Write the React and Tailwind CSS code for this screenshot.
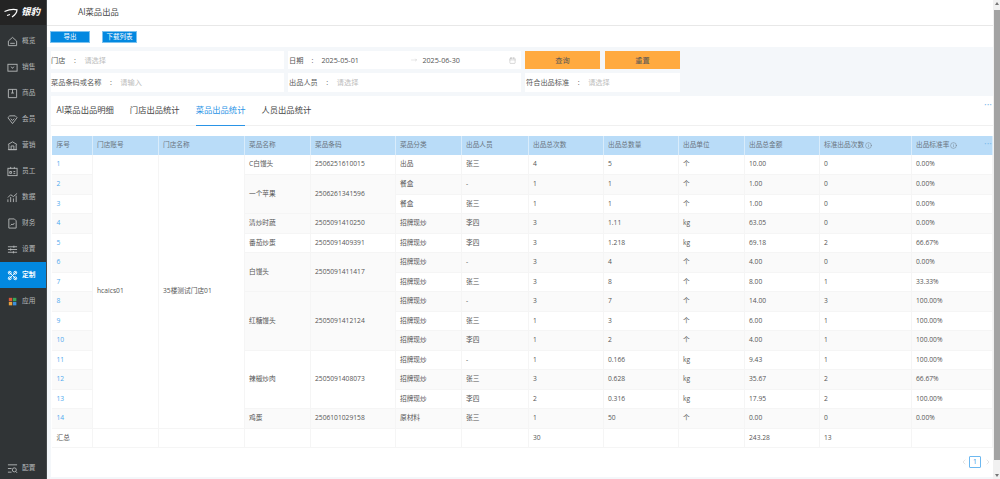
import React from "react";
import { Info, Calendar, ChevronLeft, ChevronRight, MoveRight } from "lucide-react";

const stroke = { fill: "none", stroke: "currentColor", strokeWidth: 1 };
const icons = {
  home: <svg viewBox="0 0 12 12" className="w-[11px] h-[11px]" {...stroke}><path d="M1.5 10.5V5.5L6 1.5l4.500 4v5z" /><path d="M3.500 8h5" /></svg>,
  sale: <svg viewBox="0 0 12 12" className="w-[11px] h-[11px]" {...stroke}><rect x="1" y="2.500" width="10" height="7.500" /><path d="M4.500 5l1.500 2 1.500-2" /></svg>,
  box: <svg viewBox="0 0 12 12" className="w-[11px] h-[11px]" {...stroke}><path d="M1.500 1.500h9v9h-9z" /><path d="M6 1.500v4M4.500 5.500h3" /></svg>,
  member: <svg viewBox="0 0 12 12" className="w-[11px] h-[11px]" {...stroke}><path d="M1 4l2-2h6l2 2-5 6.500z" /><path d="M4 5l2 2 2-2" /></svg>,
  market: <svg viewBox="0 0 12 12" className="w-[11px] h-[11px]" {...stroke}><path d="M1 5l5-3 5 3M2 5v5.500h8V5M1 10.500h10M4.500 10.500V6.500h3v4" /></svg>,
  staff: <svg viewBox="0 0 12 12" className="w-[11px] h-[11px]" {...stroke}><rect x="1" y="2.500" width="10" height="8" /><path d="M4 1v2M8 1v2M3 6h2v2H3zM7 6h2M7 8h2" /></svg>,
  data: <svg viewBox="0 0 12 12" className="w-[11px] h-[11px]" {...stroke}><path d="M1 11V8M4 11V5.500M7 11V7M10 11V4M1 6l3-3 3 2 4-3.500" /></svg>,
  finance: <svg viewBox="0 0 12 12" className="w-[11px] h-[11px]" {...stroke}><path d="M2 1h6l2 2v8H2z" /><path d="M4 8l1.500-1.500L6.500 7.500 8 5.500" /></svg>,
  setting: <svg viewBox="0 0 12 12" className="w-[11px] h-[11px]" {...stroke}><path d="M1 3h10M1 6h10M1 9h10" /><path d="M7.500 1.800v2.400M4 4.800v2.400M7 7.800v2.400" /></svg>,
  custom: <svg viewBox="0 0 12 12" className="w-[11px] h-[11px]" {...stroke}><path d="M2 2l8 8M10 2l-8 8" /><circle cx="3" cy="3" r="1.600" /><circle cx="9" cy="3" r="1.600" /><circle cx="9" cy="9" r="1.600" /><circle cx="3" cy="9" r="1.600" /></svg>,
  app: <svg viewBox="0 0 12 12" className="w-[11px] h-[11px]"><rect x="2" y="2" width="3.700" height="3.700" fill="#d9583b" /><rect x="6.500" y="2" width="3.700" height="3.700" fill="#3aa757" /><rect x="2" y="6.500" width="3.700" height="3.700" fill="#e8a33d" /><rect x="6.500" y="6.500" width="3.700" height="3.700" fill="#3d8fd9" /></svg>,
  config: <svg viewBox="0 0 12 12" className="w-[11px] h-[11px]" {...stroke}><path d="M1 2h10M1 6h4M1 10h4" /><circle cx="8" cy="7.500" r="2.200" /><path d="M9.600 9.200L11 10.800" /></svg>,
};

const menu = [
  ["概览", "home"], ["销售", "sale"], ["商品", "box"], ["会员", "member"], ["营销", "market"], ["员工", "staff"],
  ["数据", "data"], ["财务", "finance"], ["设置", "setting"], ["定制", "custom"], ["应用", "app"],
];

const heads = ["序号", "门店账号", "门店名称", "菜品名称", "菜品条码", "菜品分类", "出品人员", "出品总次数", "出品总数量", "出品单位", "出品总金额", "标准出品次数", "出品标准率"];

const rows = [
  { name: "C白馒头", code: "2506251610015", span: 1, cat: "出品", who: "张三", n: "4", q: "5", u: "个", m: "10.00", s: "0", r: "0.00%" },
  { name: "一个苹果", code: "2506261341596", span: 2, cat: "餐盒", who: "-", n: "1", q: "1", u: "个", m: "1.00", s: "0", r: "0.00%" },
  { cat: "餐盒", who: "张三", n: "1", q: "1", u: "个", m: "1.00", s: "0", r: "0.00%" },
  { name: "清炒时蔬", code: "2505091410250", span: 1, cat: "招牌现炒", who: "李四", n: "3", q: "1.11", u: "kg", m: "63.05", s: "0", r: "0.00%" },
  { name: "番茄炒蛋", code: "2505091409391", span: 1, cat: "招牌现炒", who: "李四", n: "3", q: "1.218", u: "kg", m: "69.18", s: "2", r: "66.67%" },
  { name: "白馒头", code: "2505091411417", span: 2, cat: "招牌现炒", who: "-", n: "3", q: "4", u: "个", m: "4.00", s: "0", r: "0.00%" },
  { cat: "招牌现炒", who: "张三", n: "3", q: "8", u: "个", m: "8.00", s: "1", r: "33.33%" },
  { name: "红糖馒头", code: "2505091412124", span: 3, cat: "招牌现炒", who: "-", n: "3", q: "7", u: "个", m: "14.00", s: "3", r: "100.00%" },
  { cat: "招牌现炒", who: "张三", n: "1", q: "3", u: "个", m: "6.00", s: "1", r: "100.00%" },
  { cat: "招牌现炒", who: "李四", n: "1", q: "2", u: "个", m: "4.00", s: "1", r: "100.00%" },
  { name: "辣椒炒肉", code: "2505091408073", span: 3, cat: "招牌现炒", who: "-", n: "1", q: "0.166", u: "kg", m: "9.43", s: "1", r: "100.00%" },
  { cat: "招牌现炒", who: "张三", n: "3", q: "0.628", u: "kg", m: "35.67", s: "2", r: "66.67%" },
  { cat: "招牌现炒", who: "李四", n: "2", q: "0.316", u: "kg", m: "17.95", s: "2", r: "100.00%" },
  { name: "鸡蛋", code: "2506101029158", span: 1, cat: "原材料", who: "张三", n: "1", q: "50", u: "个", m: "0.00", s: "0", r: "0.00%" },
];

const td = "border-r border-b border-[#f5f5f5] pl-[4.5px] pr-0 align-middle font-normal";

function Field({ label, placeholder, className }) {
  return (
    <div className={"flex items-center bg-white " + className}>
      <span>{label}</span>
      <span className="w-[19px] text-center">:</span>
      <span className="text-[#bdbdbd]">{placeholder}</span>
    </div>
  );
}

export default function App() {
  return (
    <div className="flex w-[1000px] h-[479px] overflow-hidden bg-[#f4f7fa] text-[6.7px] text-[#555] font-['Open_Sans','Noto_Sans_CJK_SC',sans-serif]">
      <aside className="w-[47px] shrink-0 flex flex-col bg-[#303436] border-r border-[#45494b] text-[#b4b7b8]">
        <div className="h-[25px] shrink-0 mb-[3px] bg-[#242424] flex items-center pl-[4px] gap-[3px] text-white">
          <svg viewBox="0 0 14 10" className="w-[14px] h-[10px]" fill="none" stroke="#fff" strokeWidth="1.200"><path d="M0.500 3.500C4 2 9 1 13 1.800 13 4 11 7 8 9" /><path d="M3 7.500l3-1" /></svg>
          <span className="italic font-bold text-[9.500px]">银豹</span>
        </div>
        {menu.map(([t, ic]) => (
          <div key={t} className={"h-[26px] flex items-center pl-[7px] gap-[4px] " + (t === "定制" ? "bg-[#0288e0] text-white font-bold" : "")}>
            {icons[ic]}
            <span>{t}</span>
          </div>
        ))}
        <div className="mt-auto h-[22px] flex items-center pl-[7px] gap-[4px]">
          {icons.config}
          <span>配置</span>
        </div>
      </aside>

      <div className="flex-1 min-w-0 flex flex-col">
        <header className="h-[26px] shrink-0 bg-white border-b border-[#e8e8e8] flex items-center pl-[31px] text-[8.300px] text-[#444]">
          AI菜品出品
        </header>
        <div className="h-[21px] shrink-0 bg-white flex items-center pl-[3px] gap-[12px] text-white text-[6.500px]">
          <button className="w-[40px] h-[12px] bg-[#0288e0] border border-[#7cc2ef] flex items-center justify-center">导出</button>
          <button className="w-[35px] h-[12px] bg-[#0288e0] border border-[#7cc2ef] flex items-center justify-center">下载列表</button>
        </div>

        <div className="h-[49px] shrink-0 pt-[4px] pl-[4px] flex flex-col gap-[4px] text-[7.200px]">
          <div className="flex gap-[4px] h-[18px]">
            <Field label="门店" placeholder="请选择" className="w-[233px]" />
            <div className="w-[233px] flex items-center bg-white pl-[1px]">
              <span>日期</span>
              <span className="w-[18px] text-center">:</span>
              <span className="w-[89px]">2025-05-01</span>
              <MoveRight className="w-[8px] h-[6px] text-[#999]" strokeWidth={1} />
              <span className="ml-[4px]">2025-06-30</span>
              <Calendar className="w-[7px] h-[7px] ml-[49px] text-[#aaa]" strokeWidth={1.500} />
            </div>
            <button className="w-[75px] bg-[#ffaa3f] flex items-center justify-center">查询</button>
            <button className="w-[75px] ml-[1px] bg-[#ffaa3f] flex items-center justify-center">重置</button>
          </div>
          <div className="flex gap-[4px] h-[19px]">
            <Field label="菜品条码或名称" placeholder="请输入" className="w-[233px]" />
            <Field label="出品人员" placeholder="请选择" className="w-[233px] pl-[1px]" />
            <Field label="符合出品标准" placeholder="请选择" className="w-[155px] pl-[1px]" />
          </div>
        </div>

        <main className="flex-1 min-h-0 ml-[4px] mb-[2px] bg-white relative">
          <div className="h-[30px] border-b border-[#f0f0f0] flex items-center pl-[5.500px] gap-[16px] text-[8.300px] text-[#444]">
            <span>AI菜品出品明细</span>
            <span>门店出品统计</span>
            <span className="h-full flex items-center text-[#2a94e6] border-b border-[#2a94e6] mb-[-1px]">菜品出品统计</span>
            <span>人员出品统计</span>
          </div>
          <span className="absolute right-[1px] top-[4px] text-[#7fbcec] text-[10px] leading-[8px]">···</span>
          <div className="pl-[1px] pt-[10px] relative">
            <table className="table-fixed border-collapse w-[940px]">
              <colgroup>
                {[40, 66, 86, 66, 85, 66, 67, 75, 75, 66, 75, 92, 81].map((w, i) => (
                  <col key={i} style={{ width: w }} />
                ))}
              </colgroup>
              <thead>
                <tr className="h-[19px] bg-[#b9dcf8] text-[#6a7580]">
                  {heads.map((h, i) => (
                    <th key={h} className="border-r border-[#d9ecfb] pl-[4.500px] font-normal text-left">
                      <span className="inline-flex items-center">
                        {h}
                        {i >= 11 && <Info className="w-[7px] h-[7px] ml-[0.500px]" strokeWidth={1.500} />}
                      </span>
                    </th>
                  ))}
                </tr>
              </thead>
              <tbody>
                {rows.map((r, i) => {
                  const bg = i % 2 === 1 ? "bg-[#fafafa]" : "bg-white";
                  return (
                    <tr key={i} className="h-[19.500px]">
                      <td className={td + " text-[#4ea9ee] " + bg}>{i + 1}</td>
                      {i === 0 && (
                        <>
                          <td rowSpan={14} className={td + " bg-white"}>hcaics01</td>
                          <td rowSpan={14} className={td + " bg-white"}>35楼测试门店01</td>
                        </>
                      )}
                      {r.name && (
                        <>
                          <td rowSpan={r.span} className={td + " " + bg}>{r.name}</td>
                          <td rowSpan={r.span} className={td + " " + bg}>{r.code}</td>
                        </>
                      )}
                      {[r.cat, r.who, r.n, r.q, r.u, r.m, r.s, r.r].map((v, j) => (
                        <td key={j} className={td + " " + bg}>{v}</td>
                      ))}
                    </tr>
                  );
                })}
                <tr className="h-[19.500px] bg-white">
                  <td className={td}>汇总</td>
                  {["", "", "", "", "", "", "30", "", "", "243.28", "13", ""].map((v, j) => (
                    <td key={j} className={td}>{v}</td>
                  ))}
                </tr>
              </tbody>
            </table>
            <span className="absolute right-[1px] top-[13px] text-[#7fbcec] text-[10px] leading-[8px]">···</span>
          </div>
          <div className="flex items-center justify-end mt-[8px] pr-[1px] text-[#2a94e6]">
            <ChevronLeft className="w-[8px] h-[8px] text-[#c9c9c9]" strokeWidth={1.500} />
            <span className="w-[12px] h-[12px] mx-[1px] border border-[#6db8f0] rounded-[1px] flex items-center justify-center">1</span>
            <ChevronRight className="w-[8px] h-[8px] ml-[2px] text-[#c9c9c9]" strokeWidth={1.500} />
          </div>
        </main>
      </div>

      <div className="w-[7px] shrink-0 bg-[#f1f1f1] flex flex-col items-center">
        <span className="mt-[2px] w-0 h-0 border-x-[2px] border-x-transparent border-b-[3px] border-b-[#777]" />
        <div className="w-[6px] h-[450px] mt-[5px] bg-[#a3a3a3]" />
        <span className="mt-auto mb-[2px] w-0 h-0 border-x-[2px] border-x-transparent border-t-[3px] border-t-[#777]" />
      </div>
    </div>
  );
}
